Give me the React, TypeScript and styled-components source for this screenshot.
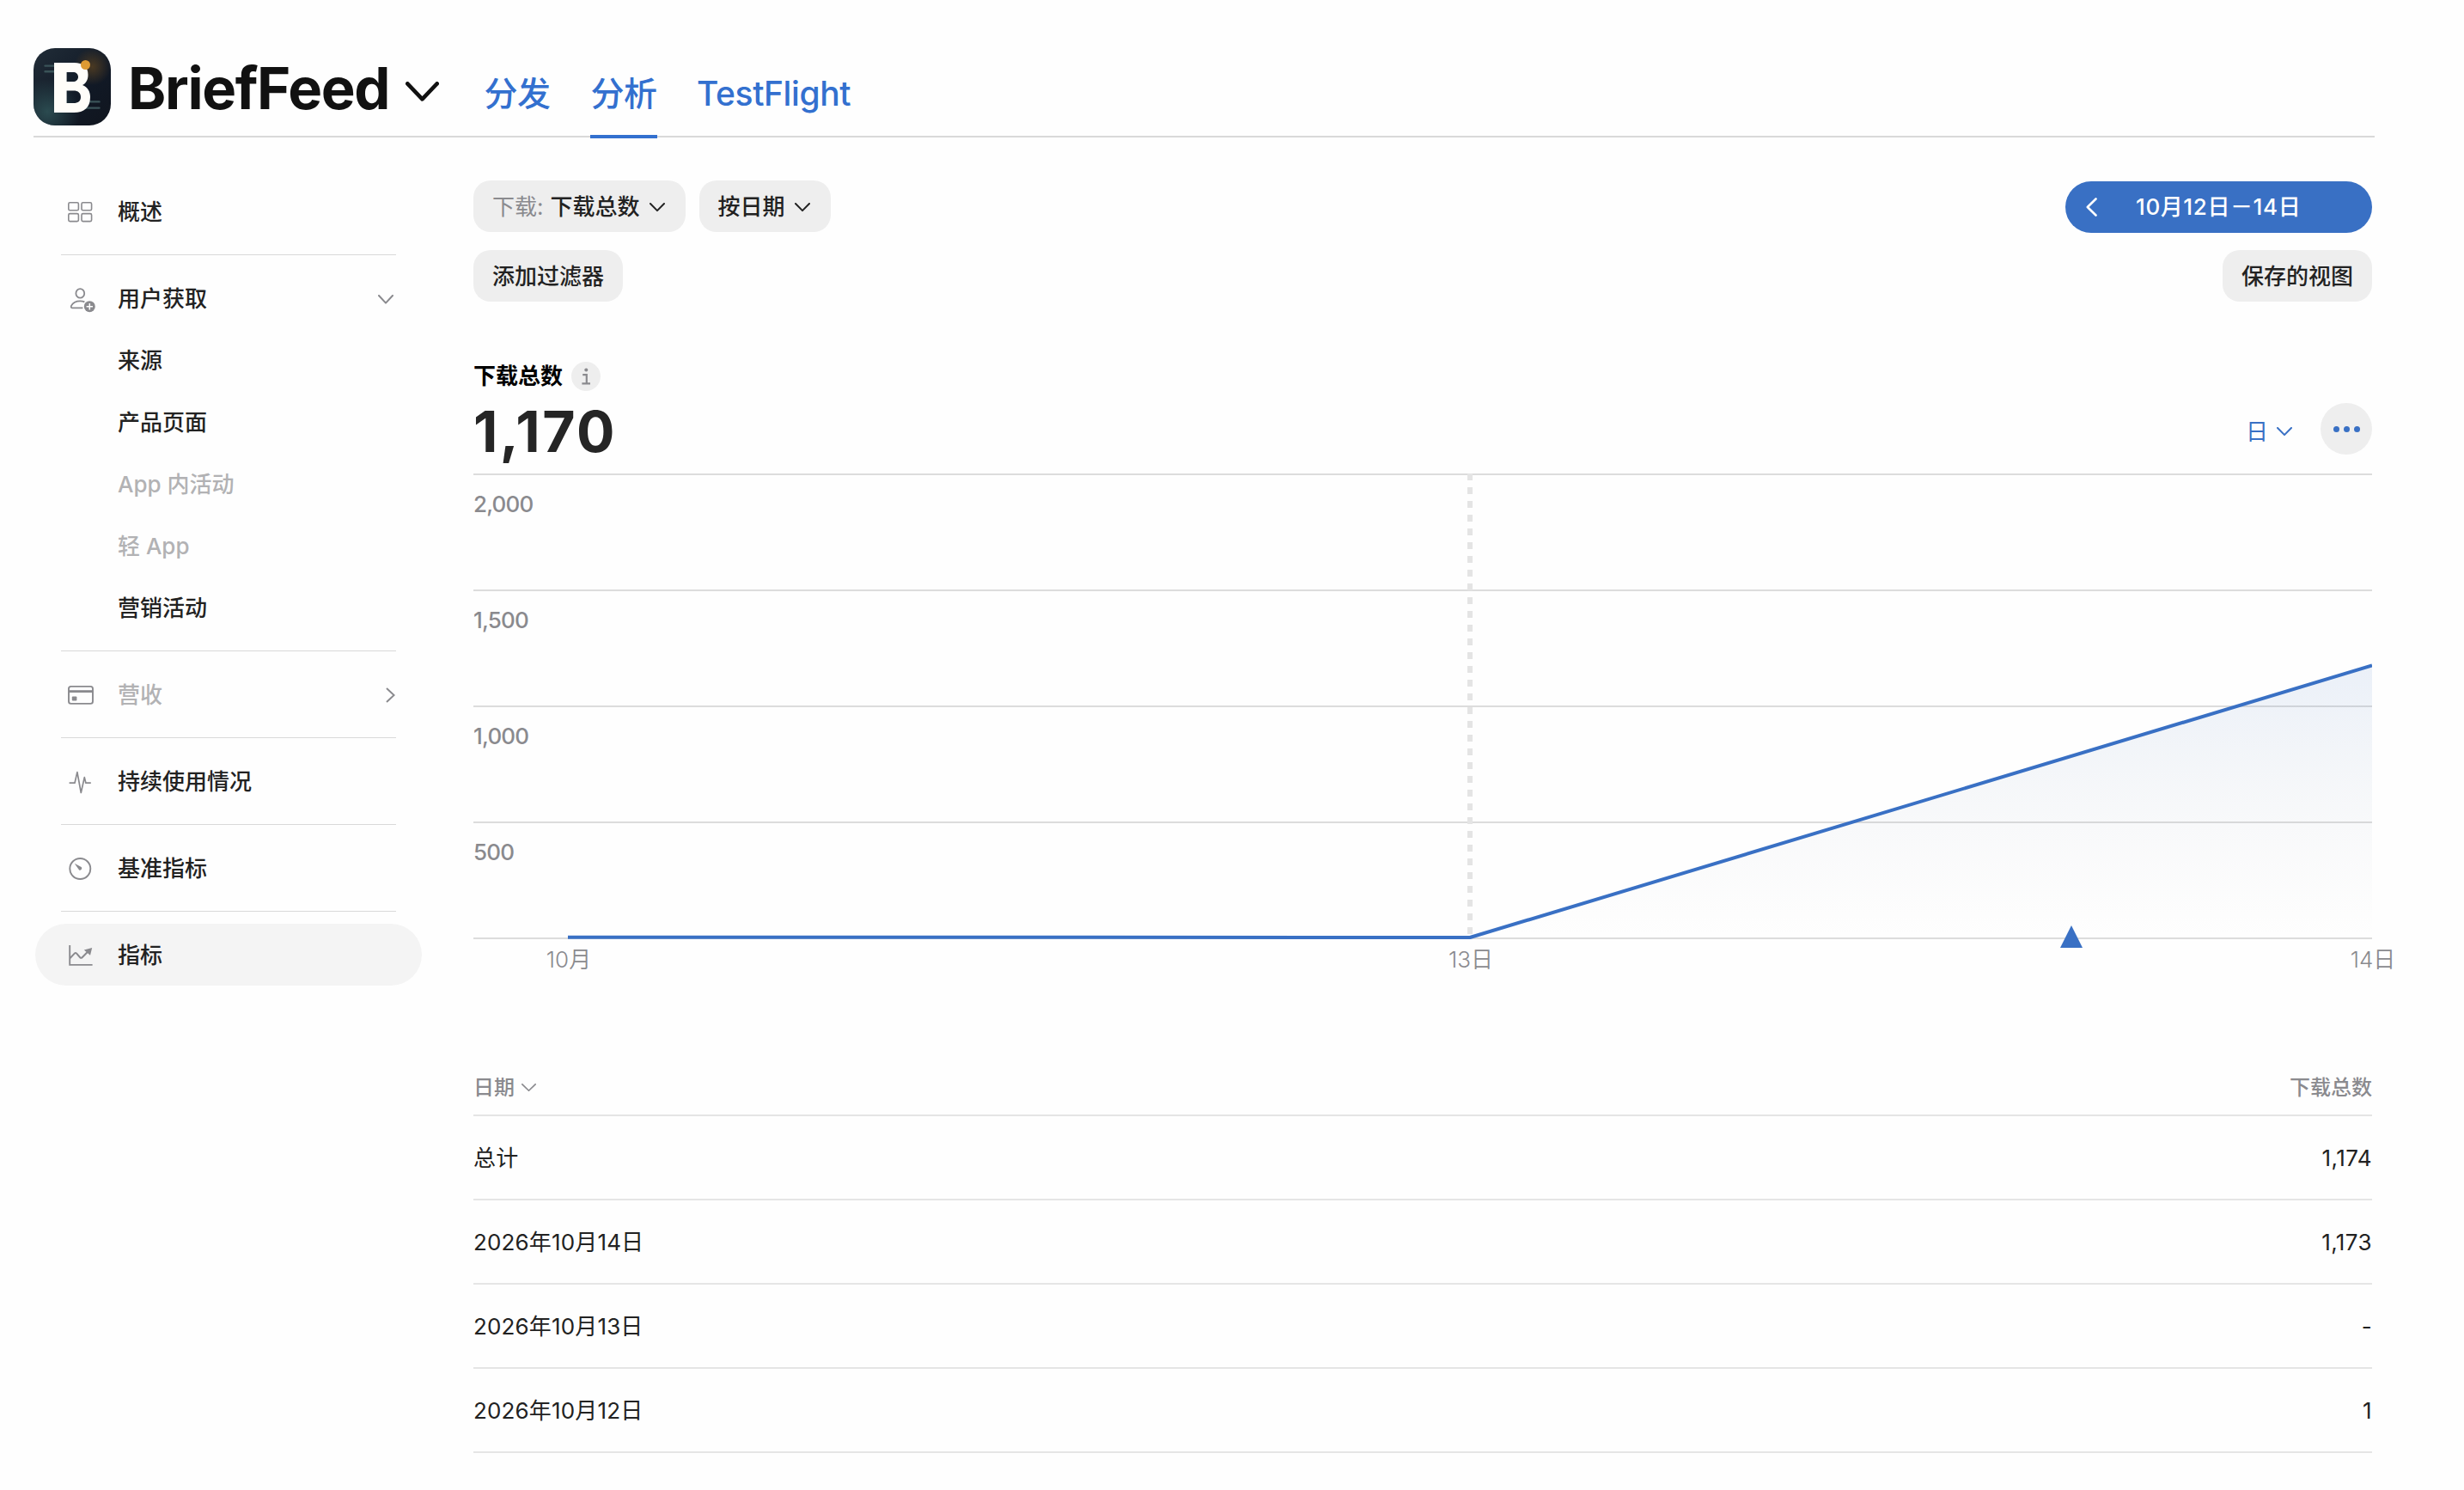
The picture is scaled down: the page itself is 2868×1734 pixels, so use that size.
import * as React from 'react'
import styled, { createGlobalStyle, css } from 'styled-components'

const BLUE = '#3970c4'
const GRAY = '#8a8a8e'

const TABS = ['分发', '分析', 'TestFlight']

const Y_LABELS = ['2,000', '1,500', '1,000', '500']

const ROWS = [
  { label: '总计', value: '1,174' },
  { label: '2026年10月14日', value: '1,173' },
  { label: '2026年10月13日', value: '-' },
  { label: '2026年10月12日', value: '1' }
]

type ChevronProps = {
  w: number
  h: number
  stroke: number
  color?: string
}

const ChevronDown: React.FC<ChevronProps> = ({ w, h, stroke, color }) => (
  <Icon width={w} height={h} viewBox={`0 0 ${w} ${h}`}>
    <path
      d={`M${stroke / 2} ${stroke / 2}L${w / 2} ${h - stroke / 2 - 0.4}L${w -
        stroke / 2} ${stroke / 2}`}
      stroke={color || '#222'}
      strokeWidth={stroke}
      strokeLinecap="round"
      strokeLinejoin="round"
    />
  </Icon>
)

const GridIcon = () => (
  <Icon width="36" height="32" viewBox="0 0 36 32">
    <g stroke={GRAY} strokeWidth="1.6">
      <rect x="1.8" y="4.8" width="11.6" height="9" rx="1.6" />
      <rect x="17" y="4.8" width="11.6" height="9" rx="1.6" />
      <rect x="1.8" y="17.6" width="11.6" height="9" rx="1.6" />
      <rect x="17" y="17.6" width="11.6" height="9" rx="1.6" />
    </g>
  </Icon>
)

const UserIcon = () => (
  <Icon width="36" height="32" viewBox="0 -1 36 32">
    <g stroke={GRAY} strokeWidth="1.8">
      <ellipse cx="15.3" cy="8.4" rx="4.9" ry="5.3" />
      <path d="M18.4 25.4H6.4C4.8 25.4 4.3 24.2 5.1 22.7C6.8 19.4 10.8 17.3 15.3 17.3C17.2 17.3 19 17.7 20.4 18.4" />
    </g>
    <circle cx="26.3" cy="23.7" r="6.5" fill={GRAY} />
    <path d="M22.6 23.7H30M26.3 20V27.4" stroke="#fff" strokeWidth="1.5" />
  </Icon>
)

const CardIcon = () => (
  <Icon width="36" height="32" viewBox="0 0 36 32">
    <rect
      x="2"
      y="5.9"
      width="28"
      height="20"
      rx="2.6"
      stroke={GRAY}
      strokeWidth="1.9"
    />
    <path d="M2 11.6H30" stroke={GRAY} strokeWidth="2.8" />
    <rect x="5.8" y="17.6" width="5.6" height="4.8" rx="1" fill={GRAY} />
  </Icon>
)

const PulseIcon = () => (
  <Icon width="36" height="32" viewBox="0 0 36 32">
    <path
      d="M2.6 17.2H9L11.9 4.6L16.3 28.5L20.3 10.6L21.9 17.2H27.8"
      stroke={GRAY}
      strokeWidth="1.7"
      strokeLinejoin="round"
    />
  </Icon>
)

const GaugeIcon = () => (
  <Icon width="36" height="32" viewBox="0 0 36 32">
    <circle cx="15.3" cy="16" r="12" stroke={GRAY} strokeWidth="1.9" />
    <path d="M8.7 9.7L16.6 14.1C18.3 15.9 16.2 18.6 14.1 17.4Z" fill={GRAY} />
  </Icon>
)

const TrendIcon = () => (
  <Icon width="36" height="32" viewBox="0 1 36 32">
    <path d="M3.2 5V27.9H29.6" stroke={GRAY} strokeWidth="1.9" />
    <path
      d="M3.6 20L8.7 14.6C9.5 13.8 10.4 13.8 11.2 14.6L15.2 19.2C16 20 16.8 20 17.6 19.2L24.5 12.3"
      stroke={GRAY}
      strokeWidth="2"
    />
    <path d="M29.2 8L19.8 10.4L27 16.8Z" fill={GRAY} />
  </Icon>
)

const AppLogo = () => (
  <Icon width="90" height="90" viewBox="0 0 90 90">
    <defs>
      <linearGradient id="base" x1="0" y1="0" x2="1" y2="1">
        <stop offset="0" stopColor="#212d38" />
        <stop offset="0.6" stopColor="#111926" />
        <stop offset="1" stopColor="#10151e" />
      </linearGradient>
      <radialGradient id="teal" cx="0.18" cy="0.82" r="0.42">
        <stop offset="0" stopColor="#2b4b50" />
        <stop offset="1" stopColor="#2b4b50" stopOpacity="0" />
      </radialGradient>
      <radialGradient id="amber" cx="0.76" cy="0.24" r="0.24">
        <stop offset="0" stopColor="#4a3922" />
        <stop offset="1" stopColor="#4a3922" stopOpacity="0" />
      </radialGradient>
    </defs>
    <rect width="90" height="90" rx="25" fill="url(#base)" />
    <rect width="90" height="90" rx="25" fill="url(#teal)" />
    <rect width="90" height="90" rx="25" fill="url(#amber)" />
    <path
      d="M13.5 20.6H26M13.5 27.2H26M62 62.4H76.5M60 69.6H76.5"
      stroke="#3a5358"
      strokeWidth="2.4"
      strokeLinecap="round"
    />
    {/* brand mark */}
    <path
      d="M24 17H47C58 17 63.5 22 63.5 31C63.5 37 61 41 57 43C63 45.5 66 50.5 66 57C66 69 59 75 47 75H24ZM38.6 28V39H46C49.5 39 52 37 52 33.5C52 30 49.5 28 46 28ZM38.6 49.5V64H46.5C52 64 55 61.5 55 57C55 52 52 49.5 46.5 49.5Z"
      fill="#fffdf9"
      fillRule="evenodd"
    />
    <circle cx="60.5" cy="19.5" r="5.5" fill="#dd9a33" />
  </Icon>
)

const Chart = () => (
  <ChartSvg width="2210" height="560" viewBox="0 0 2210 560">
    <defs>
      <linearGradient id="area" x1="0" y1="0" x2="0" y2="1">
        <stop offset="0" stopColor={BLUE} stopOpacity="0.1" />
        <stop offset="0.5" stopColor="#6682a8" stopOpacity="0.05" />
        <stop offset="1" stopColor="#888" stopOpacity="0" />
      </linearGradient>
    </defs>
    <path
      d="M0 1H2210M0 136H2210M0 271H2210M0 406H2210M0 541H2210"
      stroke="#dcdcdc"
      strokeWidth="2"
    />
    <path d="M1160 540L2210 223.4V540Z" fill="url(#area)" />
    <path
      d="M1160 0V540"
      stroke="#e4e4e4"
      strokeWidth="6"
      strokeDasharray="8 8"
    />
    <path
      d="M110 539.7L1160 540L2210 223.4"
      stroke={BLUE}
      strokeWidth="4"
      strokeLinejoin="round"
    />
    <path d="M1860 526L1873 552H1847Z" fill={BLUE} />
  </ChartSvg>
)

const App: React.FC = () => {
  const [tab, setTab] = React.useState('分析')

  return (
    <>
      <GlobalStyle />
      <Page>
        <Header>
          <AppLogo />
          <AppName>BriefFeed</AppName>
          <AppArrow>
            <ChevronDown w={39} h={23} stroke={4.6} color="#111" />
          </AppArrow>
          <Tabs>
            {TABS.map(name => (
              <Tab
                key={name}
                $active={name === tab}
                onClick={() => setTab(name)}
              >
                {name}
              </Tab>
            ))}
          </Tabs>
        </Header>

        <Body>
          <Sidebar>
            <NavItem>
              <GridIcon />
              概述
            </NavItem>
            <Divider />
            <NavItem>
              <UserIcon />
              用户获取
              <NavArrow $right={12}>
                <ChevronDown w={18} h={11} stroke={2} color={GRAY} />
              </NavArrow>
            </NavItem>
            <NavItem $child>来源</NavItem>
            <NavItem $child>产品页面</NavItem>
            <NavItem $child $disabled>
              App 内活动
            </NavItem>
            <NavItem $child $disabled>
              轻 App
            </NavItem>
            <NavItem $child>营销活动</NavItem>
            <Divider />
            <NavItem $disabled>
              <CardIcon />
              营收
              <NavArrow $right={10}>
                <Icon width="11" height="18" viewBox="0 0 11 18">
                  <path d="M1 1L9.6 9L1 17" stroke={GRAY} strokeWidth="2" />
                </Icon>
              </NavArrow>
            </NavItem>
            <Divider />
            <NavItem>
              <PulseIcon />
              持续使用情况
            </NavItem>
            <Divider />
            <NavItem>
              <GaugeIcon />
              基准指标
            </NavItem>
            <Divider />
            <NavItem $active>
              <TrendIcon />
              指标
            </NavItem>
          </Sidebar>

          <Content>
            <Toolbar>
              <Group>
                <Pill>
                  <Muted>下载:</Muted>
                  下载总数
                  <PillArrow>
                    <ChevronDown w={18} h={10.5} stroke={2} />
                  </PillArrow>
                </Pill>
                <Pill>
                  按日期
                  <PillArrow>
                    <ChevronDown w={18} h={10.5} stroke={2} />
                  </PillArrow>
                </Pill>
              </Group>
              <DateRange>
                <Icon width="13" height="22" viewBox="0 0 13 22">
                  <path
                    d="M11.5 1.5L1.8 11L11.5 20.5"
                    stroke="#fff"
                    strokeWidth="2.6"
                    strokeLinecap="round"
                    strokeLinejoin="round"
                  />
                </Icon>
                <DateText>10月12日－14日</DateText>
              </DateRange>
            </Toolbar>
            <Toolbar>
              <Pill>添加过滤器</Pill>
              <Pill>保存的视图</Pill>
            </Toolbar>

            <Metric>
              <div>
                <MetricTitle>
                  下载总数
                  <Info>
                    <Icon width="12" height="20" viewBox="0 0 12 20">
                      <circle cx="6.3" cy="2.6" r="2" fill={GRAY} />
                      <path
                        d="M2.2 8.2H6.8V18.4M1.4 18.4H11"
                        stroke={GRAY}
                        strokeWidth="2.2"
                      />
                    </Icon>
                  </Info>
                </MetricTitle>
                <MetricValue>1,170</MetricValue>
              </div>
              <Controls>
                <Interval>
                  日
                  <ChevronDown w={18} h={10.5} stroke={2} color={BLUE} />
                </Interval>
                <More>
                  <Dot />
                  <Dot />
                  <Dot />
                </More>
              </Controls>
            </Metric>

            <ChartBox>
              <Chart />
              <YAxis>
                {Y_LABELS.map(label => (
                  <YLabel key={label}>{label}</YLabel>
                ))}
              </YAxis>
              <XAxis>
                <XLabel>10月</XLabel>
                <XLabel>13日</XLabel>
                <XLabel>14日</XLabel>
              </XAxis>
            </ChartBox>

            <Table>
              <HeadRow>
                <HeadCell>
                  日期
                  <ChevronDown w={17} h={9.5} stroke={1.7} color={GRAY} />
                </HeadCell>
                <HeadCell>下载总数</HeadCell>
              </HeadRow>
              {ROWS.map(row => (
                <Row key={row.label}>
                  <Cell>{row.label}</Cell>
                  <Num>{row.value}</Num>
                </Row>
              ))}
            </Table>
          </Content>
        </Body>
      </Page>
    </>
  )
}

const GlobalStyle = createGlobalStyle`
  * {
    box-sizing: border-box;
  }

  body {
    margin: 0;
    background: #fefefe;
    color: #222;
    font-family: Inter, 'Noto Sans CJK SC', sans-serif;
    font-size: 26px;
    line-height: 1.2;
    -webkit-font-smoothing: antialiased;
  }

  button {
    border: 0;
    padding: 0;
    background: none;
    color: inherit;
    font: inherit;
  }
`

const Icon = styled.svg`
  display: block;
  flex: none;
  fill: none;
`

const Page = styled.div`
  width: 2868px;
  height: 1734px;
  overflow: hidden;
`

const Header = styled.header`
  display: flex;
  align-items: center;
  width: 2725px;
  height: 160px;
  margin-left: 39px;
  padding-top: 44px;
  border-bottom: 2px solid #d9d9d9;
`

const AppName = styled.h1`
  width: 313px;
  margin: 3px 10px 0 20px;
  white-space: nowrap;
  color: #111;
  font-size: 67px;
  font-weight: 700;
  letter-spacing: -1.35px;
  line-height: 80px;
`

const AppArrow = styled.span`
  margin-top: 10px;
`

const Tabs = styled.nav`
  display: flex;
  align-self: stretch;
  gap: 46px;
  margin: 0 0 -3px 52px;
`

const Tab = styled.button<{ $active: boolean }>`
  min-width: 78px;
  height: 117px;
  padding-top: 15px;
  border-bottom: 4px solid ${p => (p.$active ? '#3370cf' : 'transparent')};
  color: #3370cf;
  font-size: 39px;
  font-weight: 500;
  letter-spacing: -0.4px;
  line-height: 100px;
`

const Body = styled.div`
  display: flex;
  padding: 50px 0 0 41px;
`

const Sidebar = styled.aside`
  width: 450px;
`

const NavItem = styled.div<{
  $active?: boolean
  $child?: boolean
  $disabled?: boolean
}>`
  display: flex;
  align-items: center;
  height: 72px;
  padding-top: 2px;
  padding-left: ${p => (p.$child ? 96 : 37)}px;
  border-radius: 36px;
  color: ${p => (p.$disabled ? '#b2b2b4' : '#222')};
  font-weight: 500;
  ${p =>
    p.$active &&
    css`
      background: #f4f4f4;
    `}

  > svg {
    margin-right: 23px;
  }
`

const NavArrow = styled.span<{ $right: number }>`
  margin: 0 ${p => p.$right + 21}px 0 auto;
`

const Divider = styled.div`
  height: 1px;
  margin: 14px 30px;
  background: #d9d9d9;
`

const Content = styled.main`
  width: 2210px;
  margin-left: 60px;
`

const Toolbar = styled.div`
  display: flex;
  justify-content: space-between;
  height: 60px;
  margin-bottom: 21px;
`

const Group = styled.div`
  display: flex;
  gap: 16px;
`

const Pill = styled.button`
  display: flex;
  align-items: center;
  height: 60px;
  padding: 2px 22px 0;
  border-radius: 20px;
  background: #eee;
  font-weight: 500;
`

const Muted = styled.span`
  margin-right: 8px;
  color: ${GRAY};
  font-weight: 400;
`

const PillArrow = styled.span`
  margin: 1px 2px 0 11px;
`

const DateRange = styled.div`
  display: flex;
  align-items: center;
  width: 357px;
  height: 60px;
  margin-top: 1px;
  padding-left: 24px;
  border-radius: 30px;
  background: ${BLUE};
  color: #fff;
  font-weight: 500;
  letter-spacing: 0.6px;
`

const DateText = styled.span`
  margin-left: 45px;
`

const Metric = styled.section`
  display: flex;
  justify-content: space-between;
  height: 179px;
  padding-top: 49px;
`

const MetricTitle = styled.div`
  display: flex;
  align-items: center;
  height: 34px;
  color: #000;
  font-weight: 700;
`

const Info = styled.span`
  display: flex;
  align-items: center;
  justify-content: center;
  width: 34px;
  height: 34px;
  margin-left: 10px;
  border-radius: 50%;
  background: #eee;
`

const MetricValue = styled.div`
  margin-top: 7px;
  color: #252525;
  font-size: 66px;
  font-weight: 700;
  letter-spacing: 2.4px;
  line-height: 80px;
`

const Controls = styled.div`
  display: flex;
  align-items: center;
  height: 60px;
  margin-top: 48px;
`

const Interval = styled.button`
  display: flex;
  align-items: center;
  gap: 10px;
  margin-right: 33px;
  padding-top: 7px;
  color: ${BLUE};
`

const More = styled.button`
  display: flex;
  align-items: center;
  justify-content: center;
  gap: 5px;
  width: 60px;
  height: 60px;
  border-radius: 50%;
  background: #eee;
`

const Dot = styled.i`
  width: 7px;
  height: 7px;
  border-radius: 50%;
  background: ${BLUE};
`

const ChartBox = styled.section`
  display: grid;
  height: 590px;

  > * {
    grid-area: 1 / 1;
  }
`

const ChartSvg = styled.svg`
  display: block;
  fill: none;
`

const YAxis = styled.div`
  padding-top: 2px;
`

const YLabel = styled.div`
  height: 135px;
  padding-top: 16px;
  color: ${GRAY};
  font-weight: 500;
  letter-spacing: -0.8px;
  line-height: 36px;
`

const XAxis = styled.div`
  display: flex;
  justify-content: space-between;
  align-self: start;
  width: 2200px;
  margin: 549px 0 0 61px;
`

const XLabel = styled.div`
  width: 100px;
  color: ${GRAY};
  font-weight: 350;
  line-height: 34px;
  text-align: center;
`

const Table = styled.section`
  margin-top: 88px;
`

const Row = styled.div`
  display: flex;
  align-items: center;
  justify-content: space-between;
  height: 98px;
  padding-top: 1px;
  border-bottom: 2px solid #e5e5e5;
`

const HeadRow = styled(Row)`
  height: 70px;
  padding-top: 6px;
  color: ${GRAY};
  font-size: 24px;
  font-weight: 500;
`

const HeadCell = styled.div`
  display: flex;
  align-items: center;
  gap: 8px;
`

const Cell = styled.div`
  letter-spacing: 0.15px;
`

const Num = styled.div`
  letter-spacing: 0.4px;
  text-align: right;
`

export default App
